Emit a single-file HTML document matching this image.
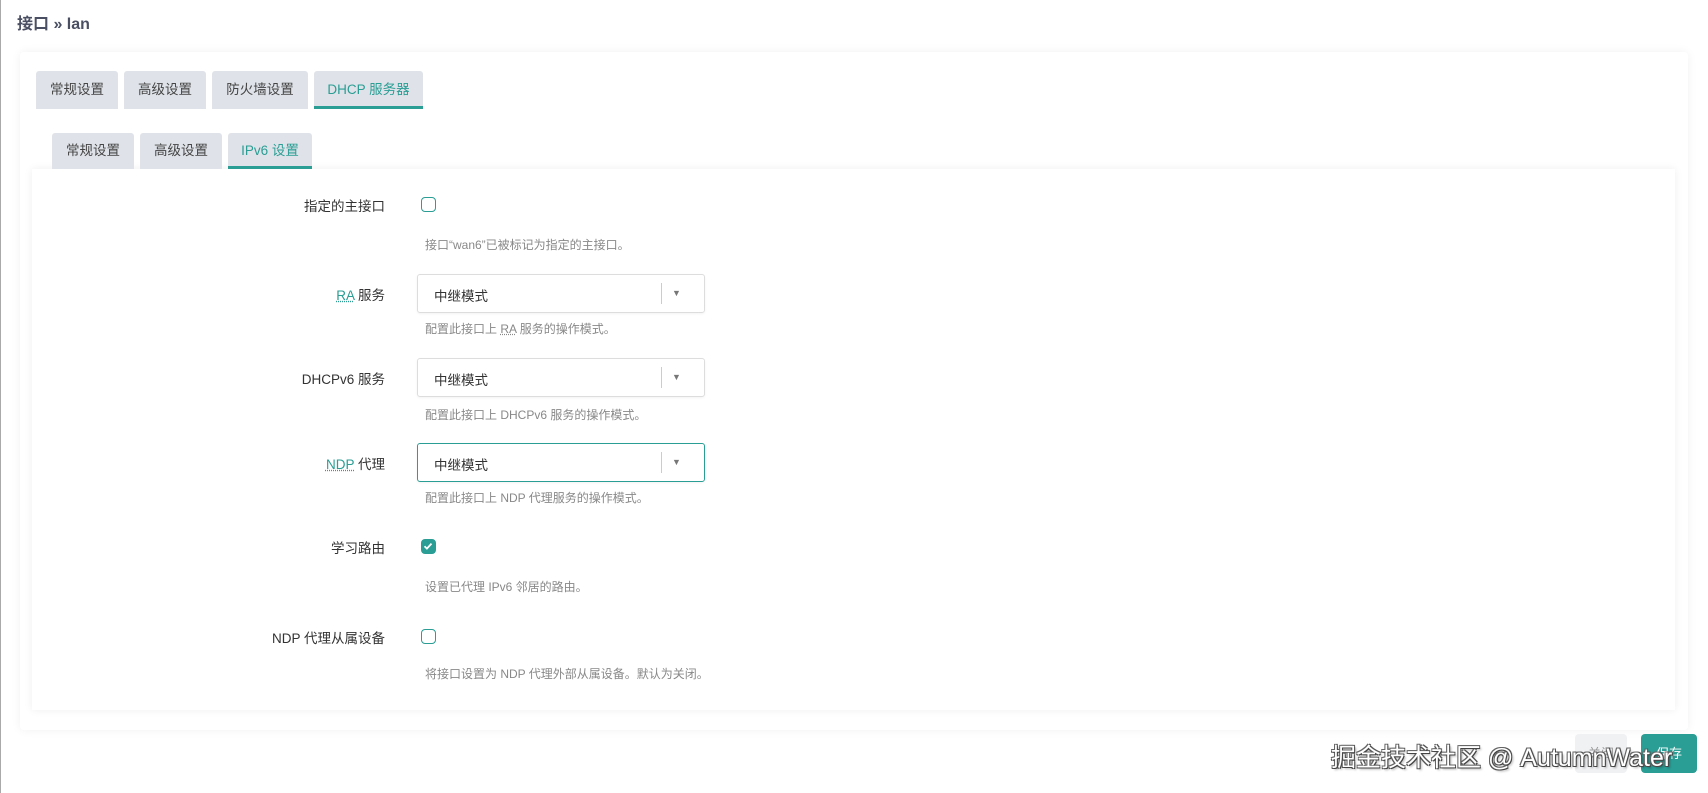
<!DOCTYPE html>
<html><head><meta charset="utf-8"><style>
body{margin:0;width:1708px;height:793px;background:#fff;font-family:"Liberation Sans","Noto Sans CJK SC",sans-serif;position:relative;overflow:hidden;color:#333;font-size:13px}
.abs{position:absolute}
.title{left:17px;top:10px;font-size:16px;font-weight:bold;color:#4a4f63}
.outer{left:20px;top:52px;width:1668px;height:678px;background:#fff;box-shadow:0 0 10px rgba(0,0,0,.06);border-radius:4px}
.tab{position:absolute;background:#dfe3e9;color:#444;font-size:13.5px;text-align:center;border-radius:3px 3px 0 0;box-sizing:border-box}
.tab.act{color:#2a9d94;border-bottom:3px solid #2a9d94}
.inner{left:32px;top:169px;width:1643px;height:541px;background:#fff;box-shadow:0 0 8px rgba(0,0,0,.07)}
.lbl{position:absolute;right:1323px;font-size:13.5px;color:#333;white-space:nowrap;text-align:right}
.lbl u{color:#2a9d94;text-decoration:underline dotted}
.desc{position:absolute;left:425px;font-size:12px;color:#888;white-space:nowrap}
.desc u{text-decoration:underline dotted}
.cb{position:absolute;left:421px;width:15px;height:15px;border:1.5px solid #2a9d94;border-radius:4px;box-sizing:border-box}
.cb.on{background:#2a9d94}
.sel{position:absolute;left:417px;width:288px;height:39px;border:1px solid #ddd;border-radius:3px;box-sizing:border-box;box-shadow:0 1px 2px rgba(0,0,0,.05)}
.sel.f{border-color:#2a9d94}
.sel span{position:absolute;left:16px;top:10px;font-size:13.5px;color:#333}
.sel i{position:absolute;left:243px;top:8px;width:1px;height:21px;background:#ccc}
.sel b{position:absolute;left:254px;top:13px;font-size:9px;color:#777;font-weight:normal}
.btn{position:absolute;top:734px;height:39px;border-radius:4px;font-size:13px;text-align:center;line-height:39px}
.wm{left:1331px;top:738px;font-size:25px;color:#fff;white-space:nowrap;text-shadow:1px 1px 0 #444,-1px -1px 0 #666,1px -1px 0 #555,-1px 1px 0 #555,2px 2px 2px rgba(0,0,0,.3)}
</style></head><body>
<div class="abs title">接口 » lan</div>
<div class="abs" style="left:0;top:0;width:1px;height:793px;background:#aaa"></div>
<div class="abs outer"></div>
<div class="tab" style="left:36px;top:71px;width:82px;height:38px;line-height:38px">常规设置</div>
<div class="tab" style="left:124px;top:71px;width:82px;height:38px;line-height:38px">高级设置</div>
<div class="tab" style="left:212px;top:71px;width:96px;height:38px;line-height:38px">防火墙设置</div>
<div class="tab act" style="left:314px;top:71px;width:109px;height:38px;line-height:38px">DHCP 服务器</div>
<div class="abs inner"></div>
<div class="tab" style="left:52px;top:133px;width:82px;height:36px;line-height:36px">常规设置</div>
<div class="tab" style="left:140px;top:133px;width:82px;height:36px;line-height:36px">高级设置</div>
<div class="tab act" style="left:228px;top:133px;width:84px;height:36px;line-height:36px">IPv6 设置</div>

<div class="lbl" style="top:195px">指定的主接口</div>
<div class="cb" style="top:197px"></div>
<div class="desc" style="top:236px">接口“wan6”已被标记为指定的主接口。</div>

<div class="lbl" style="top:284px"><u>RA</u> 服务</div>
<div class="sel" style="top:274px"><span>中继模式</span><i></i><b>▼</b></div>
<div class="desc" style="top:320px">配置此接口上 <u>RA</u> 服务的操作模式。</div>

<div class="lbl" style="top:368px">DHCPv6 服务</div>
<div class="sel" style="top:358px"><span>中继模式</span><i></i><b>▼</b></div>
<div class="desc" style="top:406px">配置此接口上 DHCPv6 服务的操作模式。</div>

<div class="lbl" style="top:453px"><u>NDP</u> 代理</div>
<div class="sel f" style="top:443px"><span>中继模式</span><i></i><b>▼</b></div>
<div class="desc" style="top:489px">配置此接口上 NDP 代理服务的操作模式。</div>

<div class="lbl" style="top:537px">学习路由</div>
<div class="cb on" style="top:539px"><svg width="12" height="12" style="position:absolute;left:0;top:0" viewBox="0 0 12 12"><path d="M2.5 6.2l2.4 2.4 4.6-5" stroke="#fff" stroke-width="1.8" fill="none"/></svg></div>
<div class="desc" style="top:578px">设置已代理 IPv6 邻居的路由。</div>

<div class="lbl" style="top:627px">NDP 代理从属设备</div>
<div class="cb" style="top:629px"></div>
<div class="desc" style="top:665px">将接口设置为 NDP 代理外部从属设备。默认为关闭。</div>

<div class="btn" style="left:1575px;width:52px;background:#f0f1f3;color:#999">关闭</div>
<div class="btn" style="left:1641px;width:56px;background:#2a9d94;color:#fff">保存</div>
<div class="abs wm">掘金技术社区 @ AutumnWater</div>
</body></html>
